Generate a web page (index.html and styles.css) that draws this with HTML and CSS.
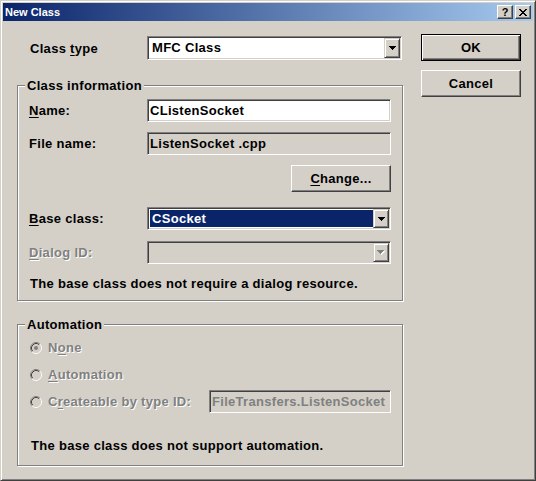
FILE: index.html
```html
<!DOCTYPE html>
<html>
<head>
<meta charset="utf-8">
<title>New Class</title>
<link rel="stylesheet" href="styles.css">
</head>
<body>
<div class="window">
  <div class="titlebar">
    <span class="title">New Class</span>
    <span class="capbtn help">?</span>
    <span class="capbtn close"><svg width="8" height="7" viewBox="0 0 8 7"><path d="M0 0h2v1h1v1h2v-1h1v-1h2v1h-1v1h-1v1h-1v1h1v1h1v1h1v1h-2v-1h-1v-1h-2v1h-1v1h-2v-1h1v-1h1v-1h1v-1h-1v-1h-1v-1h-1z" fill="#000"/></svg></span>
  </div>
  <div class="client">
    <div class="main">
      <div class="toprow">
        <span class="toplabel">Class <u>t</u>ype</span>
        <div class="combo wide">
          <span class="ctext">MFC Class</span>
          <span class="drop"><svg width="7" height="4" viewBox="0 0 7 4"><path d="M0 0H7V1H6V2H5V3H4V4H3V3H2V2H1V1H0Z" fill="#000"/></svg></span>
        </div>
      </div>

      <div class="group g1">
        <span class="legend">Class information</span>
        <div class="frow">
          <span class="flabel"><u>N</u>ame:</span>
          <div class="edit">CListenSocket</div>
        </div>
        <div class="frow">
          <span class="flabel">File name:</span>
          <div class="edit ro">ListenSocket .cpp</div>
        </div>
        <div class="brow">
          <span class="btn change"><u>C</u>hange...</span>
        </div>
        <div class="frow base">
          <span class="flabel"><u>B</u>ase class:</span>
          <div class="combo">
            <span class="ctext sel">CSocket</span>
            <span class="drop"><svg width="7" height="4" viewBox="0 0 7 4"><path d="M0 0H7V1H6V2H5V3H4V4H3V3H2V2H1V1H0Z" fill="#000"/></svg></span>
          </div>
        </div>
        <div class="frow dlg">
          <span class="flabel dis"><u>D</u>ialog ID:</span>
          <div class="combo off">
            <span class="ctext"></span>
            <span class="drop"><svg width="8" height="5" viewBox="0 0 8 5"><path transform="translate(1 1)" d="M0 0H7V1H6V2H5V3H4V4H3V3H2V2H1V1H0Z" fill="#fff"/><path d="M0 0H7V1H6V2H5V3H4V4H3V3H2V2H1V1H0Z" fill="#808080"/></svg></span>
          </div>
        </div>
        <p class="note n1">The base class does not require a dialog resource.</p>
      </div>

      <div class="group g2">
        <span class="legend">Automation</span>
        <div class="rrow">
          <svg class="radio" width="12" height="12" viewBox="0 0 12 12"><circle cx="6" cy="6" r="5" fill="#D4D0C8"/><path d="M2.11 9.89A5.5 5.5 0 0 1 9.89 2.11" fill="none" stroke="#808080"/><path d="M9.89 2.11A5.5 5.5 0 0 1 2.11 9.89" fill="none" stroke="#fff"/><path d="M2.82 9.18A4.5 4.5 0 0 1 9.18 2.82" fill="none" stroke="#404040"/><path d="M9.18 2.82A4.5 4.5 0 0 1 2.82 9.18" fill="none" stroke="#D4D0C8"/><circle cx="6" cy="6" r="2" fill="#808080"/></svg>
          <span class="rlabel dis">N<u>o</u>ne</span>
        </div>
        <div class="rrow">
          <svg class="radio" width="12" height="12" viewBox="0 0 12 12"><circle cx="6" cy="6" r="5" fill="#D4D0C8"/><path d="M2.11 9.89A5.5 5.5 0 0 1 9.89 2.11" fill="none" stroke="#808080"/><path d="M9.89 2.11A5.5 5.5 0 0 1 2.11 9.89" fill="none" stroke="#fff"/><path d="M2.82 9.18A4.5 4.5 0 0 1 9.18 2.82" fill="none" stroke="#404040"/><path d="M9.18 2.82A4.5 4.5 0 0 1 2.82 9.18" fill="none" stroke="#D4D0C8"/></svg>
          <span class="rlabel dis"><u>A</u>utomation</span>
        </div>
        <div class="rrow">
          <svg class="radio" width="12" height="12" viewBox="0 0 12 12"><circle cx="6" cy="6" r="5" fill="#D4D0C8"/><path d="M2.11 9.89A5.5 5.5 0 0 1 9.89 2.11" fill="none" stroke="#808080"/><path d="M9.89 2.11A5.5 5.5 0 0 1 2.11 9.89" fill="none" stroke="#fff"/><path d="M2.82 9.18A4.5 4.5 0 0 1 9.18 2.82" fill="none" stroke="#404040"/><path d="M9.18 2.82A4.5 4.5 0 0 1 2.82 9.18" fill="none" stroke="#D4D0C8"/></svg>
          <span class="rlabel dis">C<u>r</u>eateable by type ID:</span>
          <div class="edit off typeid">FileTransfers.ListenSocket</div>
        </div>
        <p class="note n2">The base class does not support automation.</p>
      </div>
    </div>

    <div class="side">
      <span class="btn default">OK</span>
      <span class="btn">Cancel</span>
    </div>
  </div>
</div>
</body>
</html>
```

FILE: styles.css
```css
* { box-sizing: border-box; }
html, body { margin: 0; padding: 0; }
body {
  background: #D4D0C8;
  font-family: "Liberation Sans", Arial, sans-serif;
  font-weight: bold;
  font-size: 13px;
  letter-spacing: 0.3px;
  color: #000;
}
u { text-decoration: underline; text-underline-offset: 2px; }

.window {
  width: 536px;
  height: 481px;
  border: 1px solid;
  border-color: #D4D0C8 #404040 #404040 #D4D0C8;
  box-shadow: inset 1px 1px 0 #fff, inset -1px -1px 0 #808080;
  padding: 2px;
  display: flex;
  flex-direction: column;
}

.titlebar {
  height: 18px;
  flex: none;
  background: linear-gradient(to right, #0A246A, #A6CAF0);
  display: flex;
  align-items: center;
  padding: 0 2px;
  color: #fff;
  font-size: 11px;
  line-height: 14px;
  letter-spacing: 0;
}
.title { flex: 1; }
.capbtn {
  width: 16px;
  height: 14px;
  display: flex;
  align-items: center;
  justify-content: center;
  background: #D4D0C8;
  border: 1px solid;
  border-color: #fff #404040 #404040 #fff;
  box-shadow: inset -1px -1px 0 #808080;
  color: #000;
  font-size: 11px;
}
.help { margin-right: 2px; padding-bottom: 1px; }
.close svg { display: block; }

.client {
  flex: 1;
  display: flex;
  padding-left: 14px;
}
.main {
  width: 386px;
  padding-top: 15px;
}
.side {
  width: 100px;
  margin-left: 18px;
  padding-top: 13px;
  display: flex;
  flex-direction: column;
  gap: 9px;
}

.toprow {
  display: flex;
  align-items: center;
  height: 24px;
}
.toplabel { width: 130px; padding-left: 13px; }

/* sunken fields */
.edit, .combo {
  height: 23px;
  border: 1px solid;
  border-color: #808080 #fff #fff #808080;
  box-shadow: inset 1px 1px 0 #404040, inset -1px -1px 0 #D4D0C8;
  background: #fff;
}
.edit {
  flex: 1;
  padding: 1px 2px;
  line-height: 19px;
  white-space: nowrap;
}
.edit.ro { background: #D4D0C8; }
.edit.off { background: #D4D0C8; color: #808080; }

.combo {
  flex: 1;
  display: flex;
  padding: 1px;
}
.combo.wide { flex: none; width: 255px; height: 24px; }
.combo.off { background: #D4D0C8; }
.ctext {
  flex: 1;
  margin: 1px 0 1px 1px;
  padding-left: 2px;
  line-height: 17px;
  white-space: nowrap;
}
.combo.wide .ctext { line-height: 18px; }
.ctext.sel { background: #0A246A; color: #fff; }
.drop {
  width: 16px;
  flex: none;
  display: flex;
  align-items: center;
  justify-content: center;
  background: #D4D0C8;
  border: 1px solid;
  border-color: #D4D0C8 #404040 #404040 #D4D0C8;
  box-shadow: inset 1px 1px 0 #fff, inset -1px -1px 0 #808080;
}
.drop svg { display: block; }

/* buttons */
.btn {
  display: flex;
  align-items: center;
  justify-content: center;
  height: 27px;
  width: 100px;
  border: 1px solid;
  border-color: #fff #404040 #404040 #fff;
  box-shadow: inset -1px -1px 0 #808080;
  background: #D4D0C8;
}
.btn.default {
  border-color: #000;
  box-shadow: inset 1px 1px 0 #fff, inset -1px -1px 0 #404040, inset -2px -2px 0 #808080;
}

/* group boxes */
.group {
  position: relative;
  border: 1px solid #808080;
  box-shadow: inset 1px 1px 0 #fff, 1px 1px 0 #fff;
  padding: 0 11px;
}
.legend {
  position: absolute;
  top: -8px;
  left: 7px;
  padding: 0 2px;
  line-height: 15px;
  background: #D4D0C8;
}
.g1 {
  margin-top: 25px;
  height: 216px;
  padding-top: 13px;
}
.g2 {
  margin-top: 23px;
  height: 142px;
  padding-top: 11px;
  padding-left: 12px;
}

.frow {
  display: flex;
  align-items: center;
  height: 23px;
  margin-bottom: 10px;
}
.flabel { width: 118px; flex: none; }
.brow {
  display: flex;
  justify-content: flex-end;
  margin-bottom: 15px;
}
.frow.base { margin-bottom: 11px; }
.frow.dlg { margin-bottom: 0; }

.dis { color: #808080; text-shadow: 1px 1px 0 #fff; }

.note {
  margin: 0;
  line-height: 15px;
  padding-left: 1px;
}
.n1 { margin-top: 12px; }
.n2 { margin-top: 25px; }

.rrow {
  display: flex;
  align-items: center;
  height: 23px;
  margin-bottom: 4px;
}
.radio { flex: none; margin-right: 6px; display: block; }
.typeid { flex: none; width: 182px; margin-left: auto; }
```
